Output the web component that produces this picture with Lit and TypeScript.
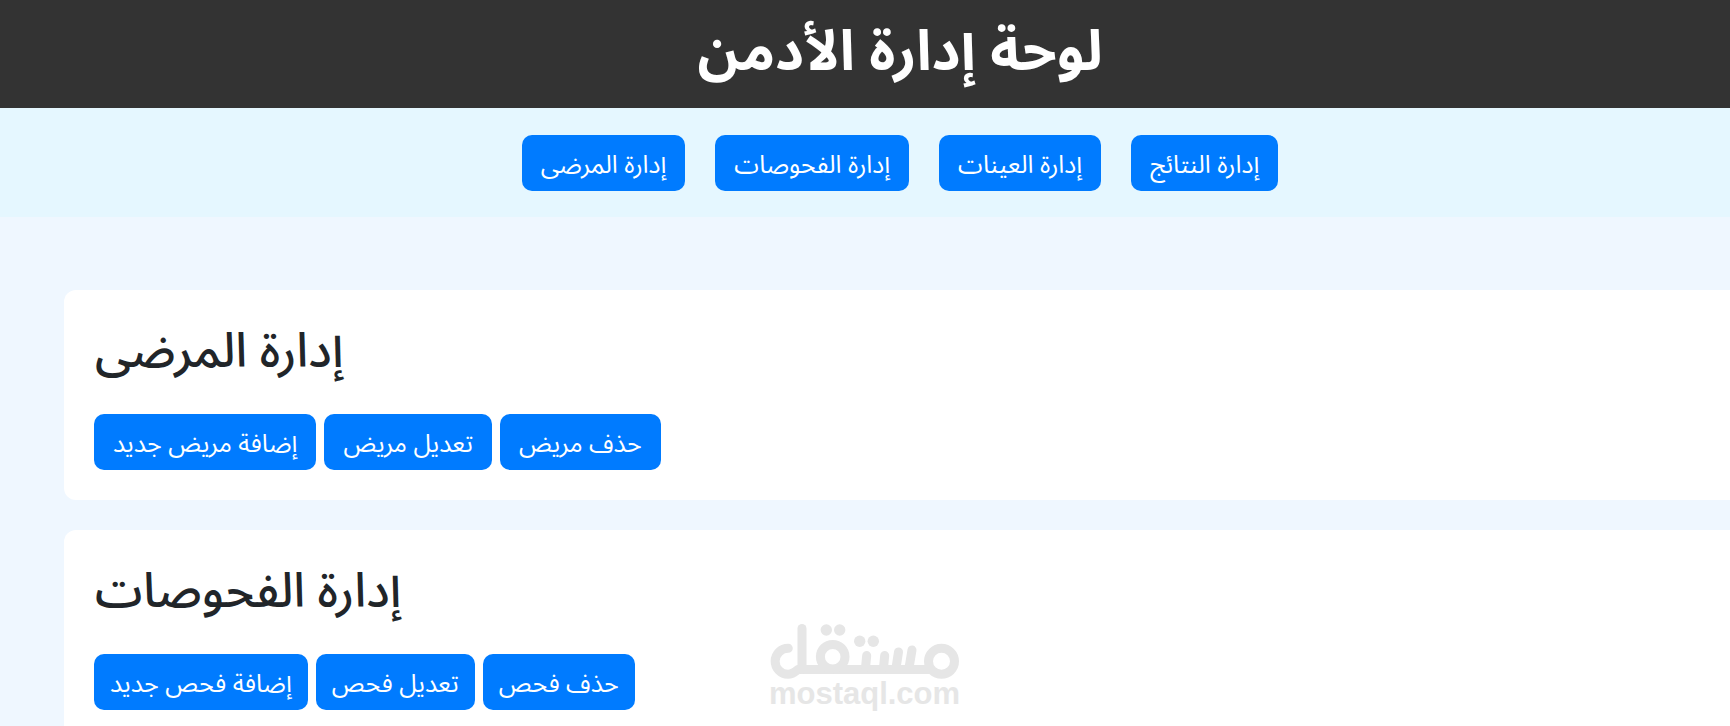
import { LitElement, html, css } from "lit";
import { customElement, property } from "lit/decorators.js";

const control = css`
  .btn {
    display: block;
    box-sizing: border-box;
    margin: 0;
    border: 0;
    border-radius: 10px;
    padding: 12px var(--btn-inset, 19px) 8px;
    background: #007bff;
    color: #fff;
    font-family: inherit;
    font-size: 25px;
    font-weight: 400;
    line-height: 36px;
    text-decoration: none;
    white-space: nowrap;
    cursor: pointer;
  }
  .btn:hover {
    background: #0069d9;
  }
`;

@customElement("admin-section")
class AdminSection extends LitElement {
  @property() heading = "";
  @property({ attribute: false }) actions: string[] = [];

  static styles = [
    control,
    css`
      :host {
        display: block;
        padding: 30px;
        border-radius: 12px;
        background: #fff;
      }
      :host([compact]) {
        --btn-inset: 16px;
      }
      .title {
        margin: 0;
        padding: 2px 1px 32px;
        color: #212529;
        font-size: 48px;
        font-weight: 500;
        line-height: 60px;
      }
      .actions {
        display: flex;
        flex-wrap: wrap;
        gap: 8px;
      }
    `,
  ];

  render() {
    return html`
      <h2 class="title">${this.heading}</h2>
      <div class="actions">
        ${this.actions.map((a) => html`<button class="btn" type="button">${a}</button>`)}
      </div>
    `;
  }
}

@customElement("app-root")
class AppRoot extends LitElement {
  static styles = [
    control,
    css`
      :host {
        display: block;
        position: relative;
        height: 100vh;
        overflow: hidden;
        background: #eff7ff;
        font-family: "Noto Sans Arabic", "DejaVu Sans", sans-serif;
      }
      .page {
        width: calc(100% + 70px);
      }
      .header {
        padding: 4px 30px 8px;
        background: #333;
        color: #fff;
        text-align: center;
      }
      .name {
        margin: 0;
        font-size: 56px;
        font-weight: 700;
        line-height: 96px;
      }
      .nav {
        display: flex;
        justify-content: center;
        gap: 30px;
        padding: 27px 30px 26px;
        background: #e5f7ff;
      }
      .main {
        display: flex;
        flex-direction: column;
        gap: 30px;
        padding: 73px 30px 30px 64px;
      }
      .mark {
        position: absolute;
        left: calc(50% - 95px);
        bottom: 12px;
        width: 190px;
        height: 92px;
      }
    `,
  ];

  render() {
    return html`
      <div class="page">
        <header class="header"><h1 class="name">لوحة إدارة الأدمن</h1></header>
        <nav class="nav">
          <a class="btn" href="#patients">إدارة المرضى</a>
          <a class="btn" href="#tests">إدارة الفحوصات</a>
          <a class="btn" href="#samples">إدارة العينات</a>
          <a class="btn" href="#results">إدارة النتائج</a>
        </nav>
        <main class="main">
          <admin-section
            id="patients"
            heading="إدارة المرضى"
            .actions=${["إضافة مريض جديد", "تعديل مريض", "حذف مريض"]}
          ></admin-section>
          <admin-section
            id="tests"
            compact
            heading="إدارة الفحوصات"
            .actions=${["إضافة فحص جديد", "تعديل فحص", "حذف فحص"]}
          ></admin-section>
        </main>
      </div>
      <svg class="mark" viewBox="0 0 190 92" role="img">
        <g fill="none" stroke="#e6e6e6" stroke-width="9" stroke-linecap="round" stroke-linejoin="round">
          <path d="M18.300 26.300A13 13 0 1 0 18 52.300C22 52.300 25 50 28 47.500H159" />
          <path d="M32 6.500V47" />
          <circle cx="62.700" cy="34.700" r="12.300" />
          <circle cx="171.500" cy="39.300" r="13" />
          <path d="M96.700 33.500L95.500 46M114.700 33.500L113.500 46M128.500 30L126 46M142 28L139 46" />
        </g>
        <g fill="#e6e6e6">
          <circle cx="56.300" cy="8" r="5.700" />
          <circle cx="69.700" cy="8" r="5.700" />
          <circle cx="89.700" cy="19.300" r="5.700" />
          <circle cx="103.300" cy="19.300" r="5.700" />
          <text x="94.500" y="82" text-anchor="middle" font-family="Liberation Sans, Arial, sans-serif" font-size="31" font-weight="700">mostaql.com</text>
        </g>
      </svg>
    `;
  }
}
